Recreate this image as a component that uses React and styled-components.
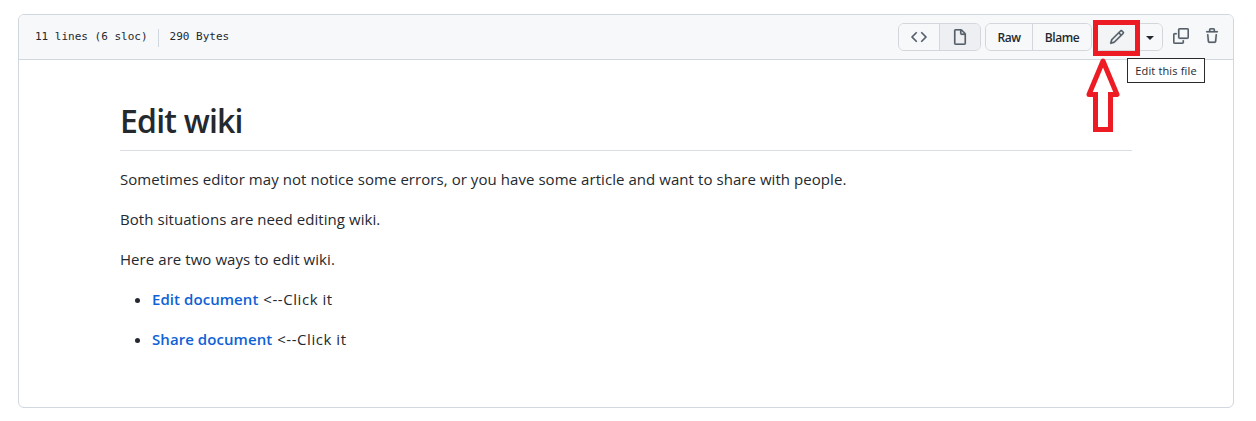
import React from 'react';
import styled, { createGlobalStyle } from 'styled-components';

const GlobalStyle = createGlobalStyle`
  *, *::before, *::after { box-sizing: border-box; }
  body {
    margin: 0;
    background: #fff;
    color: #24292f;
    font-family: "Open Sans", "Noto Sans", sans-serif;
  }
`;

const Page = styled.div`
  position: relative;
  height: 421px;
  padding: 14px 22px 13px 18px;
`;

const FileBox = styled.section`
  height: 394px;
  border: 1px solid #d0d7de;
  border-radius: 6px;
  background: #fff;
`;

const FileHeader = styled.header`
  display: flex;
  justify-content: space-between;
  height: 45px;
  padding: 8px 13px 0 16px;
  border-bottom: 1px solid #d0d7de;
  border-radius: 5px 5px 0 0;
  background: #f6f8fa;
`;

const FileInfo = styled.div`
  display: flex;
  align-items: center;
  height: 27px;
  font: 11px/18px "DejaVu Sans Mono", monospace;
  white-space: pre;
`;

const InfoDivider = styled.span`
  width: 1px;
  height: 18px;
  margin: 3px 11px 0 10px;
  background: #d0d7de;
`;

const Actions = styled.div`
  display: flex;
  align-items: flex-start;
`;

const ButtonGroup = styled.div`
  display: flex;
  height: 28px;
  margin-right: ${(p) => p.$gap}px;
  border: 1px solid #d3d7dc;
  border-radius: 6px;
  overflow: hidden;
`;

const Button = styled.button`
  display: flex;
  align-items: center;
  justify-content: center;
  width: ${(p) => p.$width}px;
  padding: 0;
  border: 0;
  background: ${(p) => (p.$selected ? '#eeeff2' : p.$hover ? '#f3f4f6' : '#f6f8fa')};
  color: ${(p) => (p.$icon ? '#57606a' : '#24292f')};
  font: 600 12px/20px "Open Sans", sans-serif;
  letter-spacing: -0.4px;

  & + & {
    border-left: 1px solid #d3d7dc;
  }
`;

const ButtonLabel = styled.span`
  padding-top: 2px;
`;

const IconButton = styled.button`
  display: flex;
  width: 16px;
  height: 16px;
  margin: 5px ${(p) => p.$gap || 0}px 0 0;
  padding: 0;
  border: 0;
  background: none;
  color: #57606a;
`;

const Caret = styled.span`
  margin-top: 1px;
  border: 4px solid transparent;
  border-top-color: #24292f;
  border-bottom: 0;
`;

const Markdown = styled.article`
  padding: 40px 101px 0;
  font-size: 15px;
  line-height: 24px;
  letter-spacing: 0.06px;
`;

const Title = styled.h1`
  height: 51px;
  margin: 0 0 16px;
  border-bottom: 1px solid #d8dee4;
  font-size: 32px;
  font-weight: 600;
  line-height: 42px;
  letter-spacing: -0.8px;
`;

const Paragraph = styled.p`
  margin: 0 0 16px;
`;

const List = styled.ul`
  margin: 0;
  padding-left: 32px;
`;

const Item = styled.li`
  margin-bottom: 16px;
`;

const DocumentLink = styled.a`
  margin-right: 1px;
  color: #0f62d6;
  font-weight: 600;
`;

const Hint = styled.span`
  letter-spacing: 0.55px;
`;

const Tooltip = styled.div`
  position: absolute;
  top: 58px;
  left: 1127px;
  width: 78px;
  height: 25px;
  border: 1px solid #2b2b2b;
  background: #fff;
  font-size: 11px;
  line-height: 23px;
  letter-spacing: 0.15px;
  text-align: center;
  white-space: nowrap;
`;

const Highlight = styled.div`
  position: absolute;
  top: 20px;
  left: 1093px;
  width: 47px;
  height: 36px;
  border: 5px solid #ed1c24;
`;

const Arrow = styled.svg`
  position: absolute;
  top: 56px;
  left: 1084px;
`;

const paths = {
  code: 'M4.72 3.22a.75.75 0 011.06 1.06L2.06 8l3.72 3.72a.75.75 0 11-1.06 1.06L.47 8.53a.75.75 0 010-1.06l4.25-4.25zm6.56 0a.75.75 0 10-1.06 1.06L13.94 8l-3.72 3.72a.75.75 0 101.06 1.06l4.25-4.25a.75.75 0 000-1.06l-4.25-4.25z',
  file: 'M3.75 1.5a.25.25 0 00-.25.25v12.5c0 .138.112.25.25.25h8.5a.25.25 0 00.25-.25V6H9.75A1.75 1.75 0 018 4.25V1.5H3.75zm5.75.56v2.19c0 .138.112.25.25.25h2.19L9.5 2.06zM2 1.75C2 .784 2.784 0 3.75 0h5.086c.464 0 .909.184 1.237.513l3.414 3.414c.329.328.513.773.513 1.237v9.086A1.75 1.75 0 0112.25 16h-8.5A1.75 1.75 0 012 14.25V1.75z',
  pencil: 'M11.013 1.427a1.75 1.75 0 012.474 0l1.086 1.086a1.75 1.75 0 010 2.474l-8.61 8.61c-.21.21-.47.364-.756.445l-3.251.93a.75.75 0 01-.927-.928l.929-3.25a1.75 1.75 0 01.445-.758l8.61-8.61zm1.414 1.06a.25.25 0 00-.354 0L10.811 3.75l1.439 1.44 1.263-1.263a.25.25 0 000-.354l-1.086-1.086zM11.189 6.25L9.75 4.81l-6.286 6.287a.25.25 0 00-.064.108l-.558 1.953 1.953-.558a.249.249 0 00.108-.064l6.286-6.286z',
  copy: 'M0 6.75C0 5.784.784 5 1.75 5h1.5a.75.75 0 010 1.5h-1.5a.25.25 0 00-.25.25v7.5c0 .138.112.25.25.25h7.5a.25.25 0 00.25-.25v-1.5a.75.75 0 011.5 0v1.5A1.75 1.75 0 019.25 16h-7.5A1.75 1.75 0 010 14.25v-7.5zM5 1.75C5 .784 5.784 0 6.75 0h7.5C15.216 0 16 .784 16 1.75v7.5A1.75 1.75 0 0114.25 11h-7.5A1.75 1.75 0 015 9.25v-7.5zm1.75-.25a.25.25 0 00-.25.25v7.5c0 .138.112.25.25.25h7.5a.25.25 0 00.25-.25v-7.5a.25.25 0 00-.25-.25h-7.5z',
  trash: 'M6.5 1.75a.25.25 0 01.25-.25h2.5a.25.25 0 01.25.25V3h-3V1.75zm4.5 0V3h2.25a.75.75 0 010 1.5H2.75a.75.75 0 010-1.5H5V1.75C5 .784 5.784 0 6.75 0h2.5C10.216 0 11 .784 11 1.75zM4.496 6.675a.75.75 0 10-1.492.15l.66 6.6A1.75 1.75 0 005.405 15h5.19c.9 0 1.652-.681 1.741-1.576l.66-6.6a.75.75 0 00-1.492-.149l-.66 6.6a.25.25 0 01-.249.225h-5.19a.25.25 0 01-.249-.225l-.66-6.6z',
};

const Icon = ({ name }) => (
  <svg width="16" height="16" viewBox="0 0 16 16" fill="currentColor" stroke="currentColor" strokeWidth="0.2" aria-hidden="true">
    <path fillRule="evenodd" d={paths[name]} />
  </svg>
);

export default function App() {
  return (
    <Page>
      <GlobalStyle />
      <FileBox>
        <FileHeader>
          <FileInfo>
            11 lines (6 sloc)
            <InfoDivider />
            290 Bytes
          </FileInfo>
          <Actions>
            <ButtonGroup $gap={4}>
              <Button $width={40} $icon><Icon name="code" /></Button>
              <Button $width={41} $icon $selected><Icon name="file" /></Button>
            </ButtonGroup>
            <ButtonGroup $gap={3}>
              <Button $width={46}><ButtonLabel>Raw</ButtonLabel></Button>
              <Button $width={59}><ButtonLabel>Blame</ButtonLabel></Button>
            </ButtonGroup>
            <ButtonGroup $gap={10}>
              <Button $width={41} $icon $hover><Icon name="pencil" /></Button>
              <Button $width={25}><Caret /></Button>
            </ButtonGroup>
            <IconButton $gap={15}><Icon name="copy" /></IconButton>
            <IconButton><Icon name="trash" /></IconButton>
          </Actions>
        </FileHeader>
        <Markdown>
          <Title>Edit wiki</Title>
          <Paragraph>
            Sometimes editor may not notice some errors, or you have some article and want to share with people.
          </Paragraph>
          <Paragraph>Both situations are need editing wiki.</Paragraph>
          <Paragraph>Here are two ways to edit wiki.</Paragraph>
          <List>
            <Item><DocumentLink>Edit document</DocumentLink> <Hint>&lt;--Click it</Hint></Item>
            <Item><DocumentLink>Share document</DocumentLink> <Hint>&lt;--Click it</Hint></Item>
          </List>
        </Markdown>
      </FileBox>
      <Highlight />
      <Arrow width="38" height="78" viewBox="0 0 38 78" fill="none" stroke="#ed1c24" strokeWidth="5">
        <path d="M11.5 38.5H5L19 5L33 38.5H26.5" strokeLinejoin="round" />
        <path d="M11.5 36V73.5H26.5V36" />
      </Arrow>
      <Tooltip>Edit this file</Tooltip>
    </Page>
  );
}
